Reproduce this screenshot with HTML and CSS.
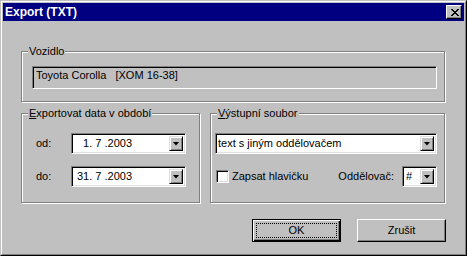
FILE: index.html
```html
<!DOCTYPE html>
<html lang="cs">
<head>
<meta charset="utf-8">
<title>Export (TXT)</title>
<link rel="stylesheet" href="styles.css">
</head>
<body>
<div class="window">
  <div class="frame">
    <div class="titlebar">
      <span class="title">Export (TXT)</span>
      <span class="close">
        <svg width="8" height="7" viewBox="0 0 8 7"><path d="M0 0h2v1H0zM6 0h2v1H6zM1 1h2v1H1zM5 1h2v1H5zM2 2h4v1H2zM3 3h2v1H3zM2 4h4v1H2zM1 5h2v1H1zM5 5h2v1H5zM0 6h2v1H0zM6 6h2v1H6z" fill="#000"/></svg>
      </span>
    </div>
    <div class="client">
      <div class="group g-vehicle">
        <span class="legend">Vozidlo</span>
        <div class="edit">Toyota Corolla&nbsp;&nbsp; [XOM 16-38]</div>
      </div>
      <div class="row">
        <div class="group g-period">
          <span class="legend"><u>E</u>xportovat data v období</span>
          <div class="field">
            <span class="label">od:</span>
            <div class="combo date"><span class="value">&nbsp;&nbsp;1. 7 .2003</span><span class="drop"></span></div>
          </div>
          <div class="field">
            <span class="label">do:</span>
            <div class="combo date"><span class="value">31. 7 .2003</span><span class="drop"></span></div>
          </div>
        </div>
        <div class="group g-output">
          <span class="legend"><u>V</u>ýstupní soubor</span>
          <div class="combo wide"><span class="value">text s jiným oddělovačem</span><span class="drop"></span></div>
          <div class="options">
            <span class="check"></span>
            <span class="check-label">Zapsat hlavičku</span>
            <span class="sep-label">Oddělovač:</span>
            <div class="combo small"><span class="value">#</span><span class="drop"></span></div>
          </div>
        </div>
      </div>
      <div class="buttons">
        <div class="btn default"><span class="focus">OK</span></div>
        <div class="btn">Zrušit</div>
      </div>
    </div>
  </div>
</div>
</body>
</html>
```
FILE: styles.css
```css
html, body {
  margin: 0;
  padding: 0;
  background: #c0c0c0;
}

body {
  font-family: "Liberation Sans", Arial, sans-serif;
  font-size: 11px;
  color: #000;
  line-height: 13px;
}

.window {
  width: 467px;
  height: 256px;
  box-sizing: border-box;
  border: 1px solid;
  border-color: #c0c0c0 #000 #000 #c0c0c0;
}

.frame {
  height: 100%;
  box-sizing: border-box;
  border: 1px solid;
  border-color: #fff #808080 #808080 #fff;
  padding: 1px;
  display: flex;
  flex-direction: column;
  background: #c0c0c0;
}

.titlebar {
  height: 18px;
  flex: none;
  background: #000080;
  display: flex;
  align-items: center;
  padding: 0 2px 0 2px;
  color: #fff;
  font-weight: bold;
  font-size: 12px;
}

.title {
  flex: 1;
}

.close {
  width: 16px;
  height: 14px;
  box-sizing: border-box;
  border: 1px solid;
  border-color: #fff #000 #000 #fff;
  box-shadow: inset -1px -1px 0 #808080;
  background: #c0c0c0;
  display: flex;
  align-items: center;
  justify-content: center;
}

.close svg {
  display: block;
  margin-top: 1px;
  margin-left: 1px;
}

.client {
  flex: 1;
  padding: 0 18px;
  display: flex;
  flex-direction: column;
}

.group {
  position: relative;
  box-sizing: border-box;
  border: 1px solid #808080;
  box-shadow: 1px 1px 0 #fff, inset 1px 1px 0 #fff;
}

.legend {
  position: absolute;
  left: 6px;
  top: -7px;
  padding: 0 1px;
  background: #c0c0c0;
  white-space: nowrap;
}

.g-vehicle {
  margin-top: 30px;
  width: 424px;
  height: 51px;
  padding: 14px 7px 0 10px;
}

.edit {
  height: 23px;
  box-sizing: border-box;
  border: 1px solid;
  border-color: #808080 #fff #fff #808080;
  box-shadow: inset 1px 1px 0 #000;
  padding: 2px 0 0 3px;
  white-space: pre;
}

.row {
  display: flex;
  gap: 10px;
  margin-top: 11px;
  height: 90px;
}

.g-period {
  width: 179px;
  padding: 19px 0 0 14px;
  display: flex;
  flex-direction: column;
  gap: 12px;
}

.g-output {
  width: 235px;
  padding: 19px 7px 0 4px;
  display: flex;
  flex-direction: column;
  gap: 12px;
}

.field {
  display: flex;
  align-items: center;
}

.label {
  width: 35px;
}

.combo {
  height: 21px;
  box-sizing: border-box;
  border: 1px solid;
  border-color: #808080 #fff #fff #808080;
  box-shadow: inset 1px 1px 0 #000, inset -1px -1px 0 #dfdfdf;
  background: #fff;
  display: flex;
  align-items: center;
  padding: 1px 2px 1px 1px;
}

.combo .value {
  flex: 1;
  white-space: nowrap;
  overflow: hidden;
}

.combo.date {
  width: 115px;
}

.combo.date .value {
  padding-left: 4px;
}

.combo.wide {
  width: 222px;
}

.combo.wide .value {
  padding-left: 1px;
}

.combo.small {
  width: 35px;
}

.combo.small .value {
  padding-left: 2px;
}

.drop {
  width: 14px;
  height: 15px;
  flex: none;
  box-sizing: border-box;
  border: 1px solid;
  border-color: #dfdfdf #000 #000 #dfdfdf;
  box-shadow: inset 1px 1px 0 #fff, inset -1px -1px 0 #808080;
  background: #c0c0c0;
  display: flex;
  align-items: center;
  justify-content: center;
}

.drop::after {
  content: "";
  width: 7px;
  height: 4px;
  background: #000;
  clip-path: polygon(0 0, 100% 0, 50% 100%);
}

.options {
  display: flex;
  align-items: center;
  height: 21px;
}

.check {
  width: 13px;
  height: 13px;
  box-sizing: border-box;
  margin-left: 1px;
  border: 1px solid;
  border-color: #808080 #fff #fff #808080;
  box-shadow: inset 1px 1px 0 #000, inset -1px -1px 0 #dfdfdf;
  background: #fff;
}

.check-label {
  margin-left: 3px;
}

.sep-label {
  margin-left: auto;
  margin-right: 8px;
}

.buttons {
  display: flex;
  justify-content: flex-end;
  gap: 16px;
  margin-top: 16px;
}

.btn {
  width: 89px;
  height: 23px;
  box-sizing: border-box;
  border: 1px solid;
  border-color: #fff #000 #000 #fff;
  box-shadow: inset -1px -1px 0 #808080;
  display: flex;
  align-items: center;
  justify-content: center;
}

.btn.default {
  border-color: #000;
  box-shadow: inset 1px 1px 0 #fff, inset -1px -1px 0 #000, inset -2px -2px 0 #808080;
  padding: 3px;
}

.focus {
  flex: 1;
  align-self: stretch;
  border: 1px dotted #000;
  display: flex;
  align-items: center;
  justify-content: center;
}
```
